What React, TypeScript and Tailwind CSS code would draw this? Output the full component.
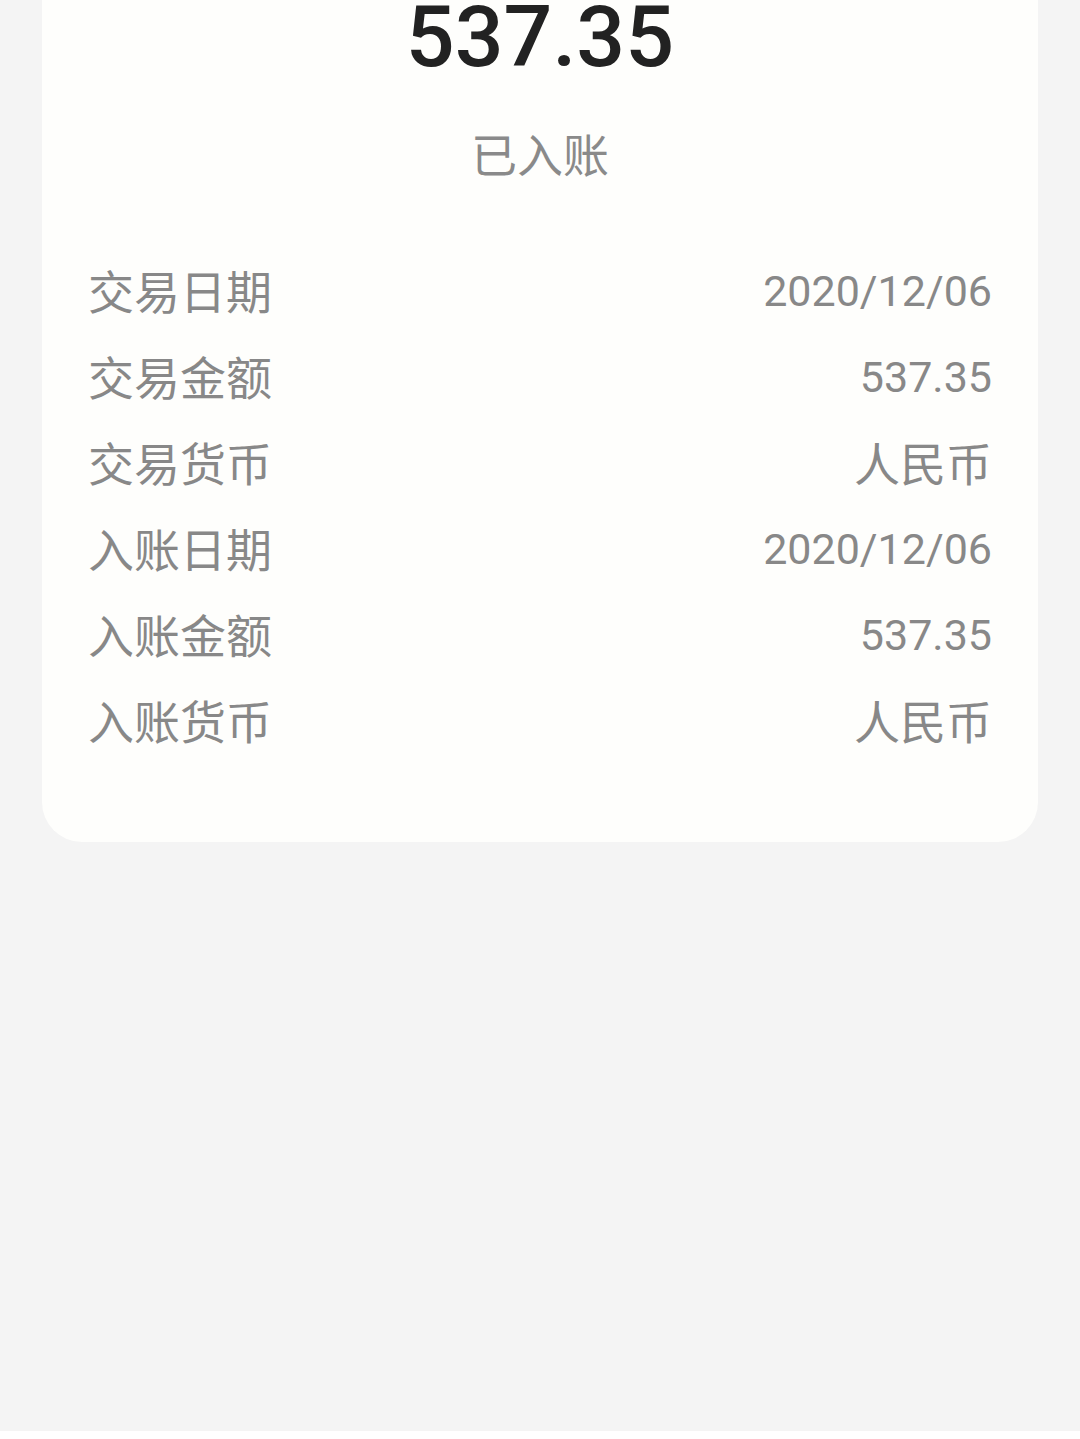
const ROWS = [
  { label: "交易日期", value: "2020/12/06" },
  { label: "交易金额", value: "537.35" },
  { label: "交易货币", value: "人民币" },
  { label: "入账日期", value: "2020/12/06" },
  { label: "入账金额", value: "537.35" },
  { label: "入账货币", value: "人民币" },
];

const NUM = "font-['Roboto','Noto_Sans_CJK_SC',sans-serif]";
const CJK = "font-['Noto_Sans_CJK_SC',sans-serif]";

export default function App() {
  return (
    <div className="min-h-[1439px] w-full bg-[#f4f4f4] px-[42px]">
      <div className="rounded-b-[40px] bg-[#fefefc] px-[46px] pb-[80px]">
        <div className={`${NUM} -mt-[8px] text-center text-[86px] font-medium leading-[90px] text-[#222222]`}>
          537.35
        </div>
        <div className={`${CJK} mt-[42px] text-center text-[46px] leading-[56px] text-[#8a8a8a]`}>
          已入账
        </div>
        <div className="mt-[66px] flex flex-col">
          {ROWS.map((row) => (
            <div key={row.label} className="flex h-[86px] items-center justify-between">
              <span className={`${CJK} text-[46px] text-[#888888]`}>{row.label}</span>
              {/^[\d./]+$/.test(row.value) ? (
                <span className={`${NUM} mt-[5px] text-[43px] text-[#888888]`}>{row.value}</span>
              ) : (
                <span className={`${CJK} text-[46px] text-[#888888]`}>{row.value}</span>
              )}
            </div>
          ))}
        </div>
      </div>
    </div>
  );
}
